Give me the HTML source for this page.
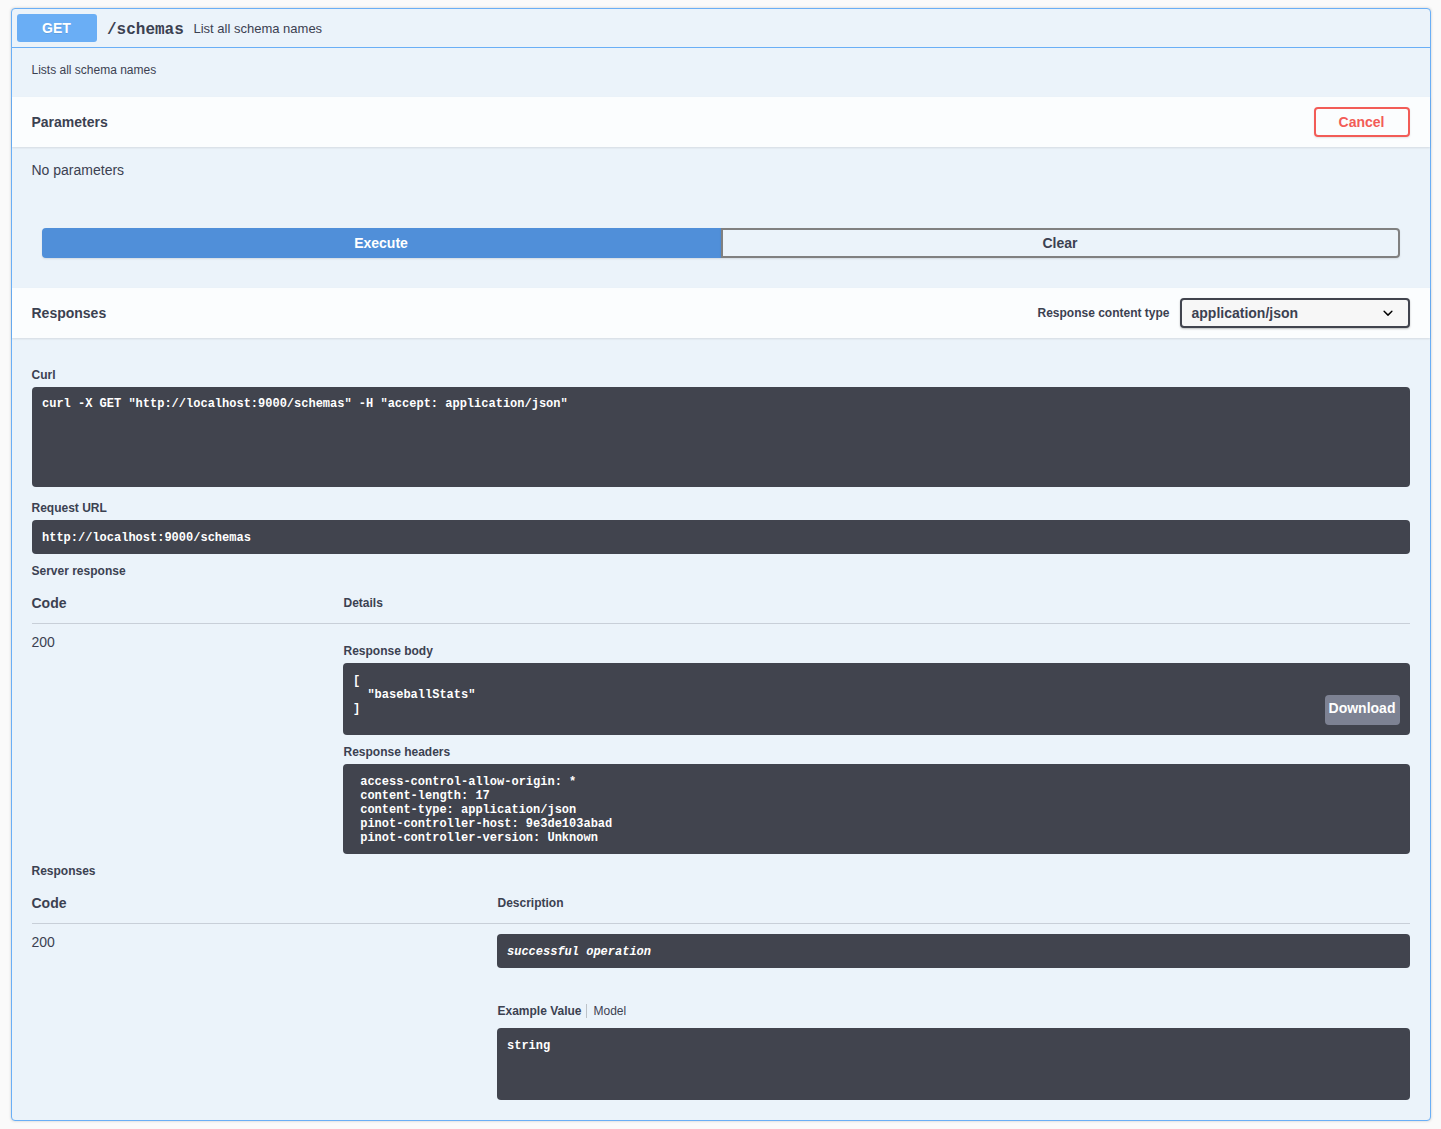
<!DOCTYPE html>
<html><head><meta charset="utf-8">
<style>
html,body{margin:0;padding:0;}
body{width:1441px;height:1129px;background:#fafafa;position:relative;overflow:hidden;font-family:"Liberation Sans",sans-serif;color:#3b4151;}
*{box-sizing:border-box;}
.ab{position:absolute;}
.op{position:absolute;left:11px;top:8px;width:1420px;height:1113px;border:1px solid #6aaff6;border-radius:4px;background:#ebf3fa;box-shadow:0 0 3px rgba(0,0,0,.19);}
.sum{position:absolute;left:0;top:0;width:1418px;height:39px;border-bottom:1px solid #6aaff6;}
.method{position:absolute;left:5px;top:5px;width:80px;height:28px;border-radius:3px;background:#6aaef5;color:#fff;font-weight:700;font-size:14px;line-height:28px;text-align:center;text-shadow:0 1px 0 rgba(0,0,0,.1);}
.path{position:absolute;left:95px;top:12px;font-family:"Liberation Mono",monospace;font-weight:700;font-size:16px;line-height:19px;color:#3b4151;}
.sdesc{position:absolute;left:181.5px;top:12px;font-size:13px;line-height:16px;}
.hdr{position:absolute;left:0;width:1418px;height:50px;background:rgba(255,255,255,.8);box-shadow:0 1px 2px rgba(0,0,0,.1);}
.hdr h4{position:absolute;left:19.5px;top:17px;margin:0;font-size:14px;line-height:17px;font-weight:700;}
.btn{position:absolute;font-size:14px;font-weight:700;border:2px solid #808080;border-radius:4px;box-shadow:0 1px 2px rgba(0,0,0,.1);text-align:center;line-height:26px;}
.pre{position:absolute;background:#41444e;border-radius:4px;color:#fff;font-family:"Liberation Mono",monospace;font-weight:700;font-size:12px;line-height:14px;padding:11px 10px 9px;white-space:pre;}
.pre.curl{padding-top:10px;}
.h5{position:absolute;margin-left:-0.5px;font-size:12px;font-weight:700;line-height:14px;}
.sel{background:#f7f7f7;border:2px solid #41444e;border-radius:4px;box-shadow:0 1px 2px 0 rgba(0,0,0,.25);font-size:14px;font-weight:700;line-height:16px;padding:5px 40px 5px 10px;}
.chev{position:absolute;right:10px;top:3px;}
.dl{background:#7d8293;border-radius:4px;color:#fff;font-size:14px;font-weight:700;line-height:16px;text-align:center;padding-top:5px;}
.t{margin-left:-0.5px;}
.method,.btn,.dl{text-indent:-1px;}
.sel{text-indent:-0.5px;}
.line{position:absolute;height:1px;background:rgba(59,65,81,.2);}
</style></head><body>
<div class="op">
  <div class="sum">
    <div class="method">GET</div>
    <div class="path">/schemas</div>
    <div class="sdesc">List all schema names</div>
  </div>
  <div class="ab t" style="left:20px;top:54px;font-size:12px;line-height:14px;">Lists all schema names</div>
  <div class="hdr" style="top:88px;">
    <h4>Parameters</h4>
    <div class="btn" style="left:1302px;top:10px;width:96px;height:30px;border-color:#f25c57;color:#f25c57;">Cancel</div>
  </div>
  <div class="ab t" style="left:20px;top:153px;font-size:14px;line-height:16px;">No parameters</div>
  <div class="btn" style="left:30px;top:219px;width:679px;height:30px;background:#508fd9;border-color:#508fd9;color:#fff;border-radius:4px 0 0 4px;">Execute</div>
  <div class="btn" style="left:709px;top:219px;width:679px;height:30px;border-radius:0 4px 4px 0;">Clear</div>
  <div class="hdr" style="top:279px;">
    <h4>Responses</h4>
    <div class="ab t" style="left:1026px;top:18px;font-size:12px;font-weight:700;line-height:14px;">Response content type</div>
    <div class="ab sel" style="left:1168px;top:10px;width:230px;height:30px;">application/json<svg class="chev" width="20" height="20" viewBox="0 0 20 20"><path fill="#000" d="M13.418 7.859a.695.695 0 01.978 0 .68.68 0 010 .969l-3.908 3.83a.697.697 0 01-.979 0l-3.908-3.83a.68.68 0 010-.969.695.695 0 01.978 0L10 11l3.418-3.141z"/></svg></div>
  </div>
  <div class="h5" style="left:20px;top:359px;">Curl</div>
  <div class="pre curl" style="left:20px;top:378px;width:1378px;height:100px;">curl -X GET "http://localhost:9000/schemas" -H "accept: application/json"</div>
  <div class="h5" style="left:20px;top:492px;">Request URL</div>
  <div class="pre" style="left:20px;top:511px;width:1378px;height:34px;">http://localhost:9000/schemas</div>
  <div class="h5" style="left:20px;top:555px;">Server response</div>
  <div class="ab t" style="left:20px;top:586px;font-size:14px;font-weight:700;line-height:16px;">Code</div>
  <div class="h5" style="left:332px;top:587px;">Details</div>
  <div class="line" style="left:20px;top:614px;width:1378px;"></div>
  <div class="ab t" style="left:20px;top:625px;font-size:14px;line-height:16px;">200</div>
  <div class="h5" style="left:332px;top:635px;">Response body</div>
  <div class="pre" style="left:331px;top:654px;width:1067px;height:72px;">[
  "baseballStats"
]</div>
  <div class="ab dl" style="left:1313px;top:686px;width:75px;height:30px;">Download</div>
  <div class="h5" style="left:332px;top:736px;">Response headers</div>
  <div class="pre" style="left:331px;top:755px;width:1067px;height:90px;"> access-control-allow-origin: * 
 content-length: 17 
 content-type: application/json 
 pinot-controller-host: 9e3de103abad 
 pinot-controller-version: Unknown </div>
  <div class="h5" style="left:20px;top:855px;">Responses</div>
  <div class="ab t" style="left:20px;top:886px;font-size:14px;font-weight:700;line-height:16px;">Code</div>
  <div class="h5" style="left:486px;top:887px;">Description</div>
  <div class="line" style="left:20px;top:914px;width:1378px;"></div>
  <div class="ab t" style="left:20px;top:925px;font-size:14px;line-height:16px;">200</div>
  <div class="pre" style="left:485px;top:925px;width:913px;height:34px;font-style:italic;">successful operation</div>
  <div class="h5" style="left:486px;top:995px;">Example Value</div>
  <div class="ab" style="left:574px;top:995px;width:1px;height:14px;background:rgba(0,0,0,.2);"></div>
  <div class="ab t" style="left:582px;top:995px;font-size:12px;line-height:14px;">Model</div>
  <div class="pre" style="left:485px;top:1019px;width:913px;height:72px;">string</div>
</div>
</body></html>
